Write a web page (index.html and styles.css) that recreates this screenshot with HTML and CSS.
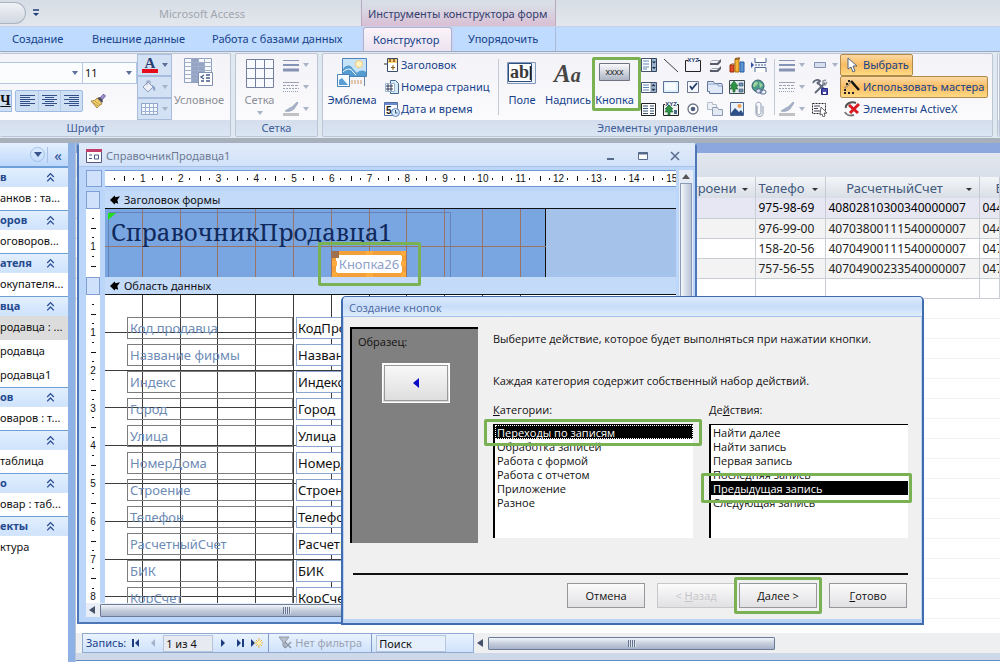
FILE: index.html
```html
<!DOCTYPE html>
<html lang="ru">
<head>
<meta charset="utf-8">
<title>Microsoft Access</title>
<link rel="stylesheet" href="styles.css">
</head>
<body>
<svg class="sprite" aria-hidden="true">
  <symbol id="i-lines" viewBox="0 0 16 16"><path d="M0 3.5h16M0 8h16M0 13h16" stroke="#8592b3"/><path d="M0 8h16" stroke="#8592b3" stroke-width="2"/><path d="M0 13h16" stroke="#8592b3" stroke-width="3"/></symbol>
  <symbol id="i-dashes" viewBox="0 0 16 16"><path d="M0 3.5h16" stroke="#9aa2b4"/><path d="M0 6.500h16" stroke="#9aa2b4" stroke-dasharray="3 1"/><path d="M0 9.500h16" stroke="#9aa2b4" stroke-dasharray="2 1"/><path d="M0 12.500h16" stroke="#9aa2b4" stroke-dasharray="1 1"/></symbol>
  <symbol id="i-pen" viewBox="0 0 16 16"><path d="M2 10c2-1 4-3 7-4l5-5 1 1-4 6c-2 2-6 3-9 2z" fill="#a9b5cc" stroke="#8490a8" stroke-width=".6"/><path d="M0 12h16v3H0z" fill="#bfc1c4"/></symbol>
  <symbol id="i-chev" viewBox="0 0 10 10"><path d="M2 4.500 5 1.500l3 3M2 8.500l3-3 3 3" fill="none" stroke="#2d4f93" stroke-width="1.200"/></symbol>
  <symbol id="i-sect" viewBox="0 0 12 10"><path d="M0 5 5 0l1 2 5-1-3 4 1 4-3-1-1 2z" fill="#000"/></symbol>
</svg>

<div class="app">
  <header class="titlebar">
    <div class="quick"><span class="orb"></span><svg width="8" height="8" viewBox="0 0 8 8"><path d="M1 1h6" stroke="#1e3c7b" stroke-width="1.500"/><path d="M1 4h6l-3 3z" fill="#1e3c7b"/></svg></div>
    <div class="apptitle">Microsoft Access</div>
    <div class="context">Инструменты конструктора форм</div>
  </header>

  <nav class="tabs">
    <button class="tab t1">Создание</button>
    <button class="tab t2">Внешние данные</button>
    <button class="tab t3">Работа с базами данных</button>
    <div class="context-tabs">
      <button class="tab active">Конструктор</button>
      <button class="tab">Упорядочить</button>
    </div>
  </nav>

  <div class="ribbon">
    <section class="group g-font">
      <div class="gbody">
        <div class="fontcol">
          <div class="combos"><div class="combo c-name"><i class="arr"></i></div><div class="combo c-size"><span>11</span><i class="arr"></i></div></div>
          <div class="fmt">
            <button class="fbtn under" aria-label="Подчеркнутый">Ч</button>
            <div class="aligns">
              <button aria-label="По левому краю"><svg width="15" height="14" viewBox="0 0 15 14"><path d="M0 1.500h15M0 3.500h10M0 5.500h15M0 7.500h10M0 9.500h15M0 11.500h10" stroke="#33508a"/></svg></button>
              <button aria-label="По центру"><svg width="15" height="14" viewBox="0 0 15 14"><path d="M0 1.500h15M3 3.500h9M0 5.500h15M3 7.500h9M0 9.500h15M3 11.500h9" stroke="#33508a"/></svg></button>
              <button aria-label="По правому краю"><svg width="15" height="14" viewBox="0 0 15 14"><path d="M0 1.500h15M5 3.500h10M0 5.500h15M5 7.500h10M0 9.500h15M5 11.500h10" stroke="#33508a"/></svg></button>
            </div>
            <button class="plain" aria-label="Формат по образцу"><svg width="16" height="16" viewBox="0 0 16 16"><path d="m10 5 3.500-4 2 2L12 7z" fill="#9d8fd0" stroke="#4b4584" stroke-width=".7"/><path d="m7 5 3-1 3 4-1 2z" fill="#4c4a57"/><path d="M1 8c3 0 5-1 6-3l5 6c-2 1-4 2-5 4z" fill="#f3d26e" stroke="#94733a" stroke-width=".8"/><path d="M3 9.500 8 13M5 8l5 4" stroke="#b38a3a" stroke-width=".8"/></svg></button>
          </div>
        </div>
        <div class="colorcol">
          <button aria-label="Цвет шрифта"><svg width="18" height="18" viewBox="0 0 18 18"><text x="9" y="12" text-anchor="middle" class="ic-a">A</text><path d="M1 13h16v4H1z" fill="#e60c1c"/></svg><i class="arr"></i></button>
          <button aria-label="Цвет заливки"><svg width="16" height="14" viewBox="0 0 16 14"><path d="M2 7 7 2l5 5-5 5z" fill="#edf0f6" stroke="#8e9cb8"/><path d="M6 5V1h3v3" fill="none" stroke="#8e9cb8"/><path d="M11 5c3 1 4 3 3 6-2 0-2-3-3-4z" fill="#8da3cc"/></svg><i class="arr dim"></i></button>
          <button aria-label="Цвет чередующейся строки"><svg width="17" height="12" viewBox="0 0 17 12"><path d="M.5.5h16v11H.5z" fill="#f4f7fb" stroke="#8ea4c8"/><path d="M0 4.500h17M0 8.500h17M4.500 0v12M8.500 0v12M12.500 0v12" stroke="#9cb1d3"/></svg><i class="arr dim"></i></button>
        </div>
        <button class="big dis"><svg width="30" height="32" viewBox="0 0 30 32"><path d="M.5 1.500h27v24H.5z" fill="#f7f9fc" stroke="#8fa0c0"/><path d="M7 1h7v24H7zM14 5h6v16h-6z" fill="#95a4c4"/><path d="M0 5.500h28M0 9.500h28M0 13.500h28M0 17.500h28M0 21.500h28M7.500 1v24M14.500 1v24M20.500 1v24" stroke="#9eafca"/><path d="M14.500 15.500h14v13h-14z" fill="#fff" stroke="#7f90b4"/><path d="m20 18-3 2 3 2m-3 2h3m2-6h4m-4 3h4m-4 3h4" fill="none" stroke="#455b8b" stroke-width="1.300"/></svg><span>Условное</span></button>
      </div>
      <h2>Шрифт</h2>
    </section>

    <section class="group g-grid">
      <div class="gbody">
        <button class="big dis"><svg width="28" height="30" viewBox="0 0 28 30"><path d="M.5.5h27v28H.5zM0 9.500h28M0 19.500h28M9.500 0v29M18.500 0v29" fill="#f8fafd" stroke="#74809d"/></svg><span>Сетка</span><i class="arr dim"></i></button>
        <div class="minicol">
          <button aria-label="Толщина линии"><svg width="16" height="16"><use href="#i-lines"/></svg><i class="arr dim"></i></button>
          <button aria-label="Тип линии"><svg width="16" height="16"><use href="#i-dashes"/></svg><i class="arr dim"></i></button>
          <button aria-label="Цвет линии"><svg width="16" height="16"><use href="#i-pen"/></svg><i class="arr dim"></i></button>
        </div>
      </div>
      <h2>Сетка</h2>
    </section>

    <section class="group g-ctl">
      <div class="gbody">
        <button class="big logo"><svg width="30" height="32" viewBox="0 0 30 32"><path d="M5.500 1.500h24v18h-24z" fill="#c7e3f8" stroke="#4d83b8"/><circle cx="22" cy="7" r="3.500" fill="#fff4c4" stroke="#f0c77a"/><path d="M6 19v-7c4-5 8-4 10 0l4 4c3-3 6-3 9-1v4z" fill="#549bd0"/><path d="M6 15c4-4 8-4 10 0l3 3" stroke="#fff" fill="none"/><path d="M.5 17.500h12v12H.5z" fill="#f5fbff" stroke="#4d83b8"/><path d="M2 28v-5l3-2 6 7z" fill="#5a9fd4"/><path d="M14 24h12M14 26h12" stroke="#c79661" stroke-dasharray="2 1"/><path d="M27.500 20v9" stroke="#6c86a6"/></svg><span>Эмблема</span></button>
        <div class="stack">
          <button><svg width="16" height="16" viewBox="0 0 16 16"><path d="M3.500 1.500h10v13h-10z" fill="#fff" stroke="#3a4a6a"/><path d="M4 2h9v4H4z" fill="#ffd681"/><path d="m5 2 2 3M7 2 5 5m4-3 2 3m0-3L9 5M9 8v5M7 10.500h4" stroke="#875b12"/><path d="M0 7h3" stroke="#333"/></svg>Заголовок</button>
          <button><svg width="16" height="16" viewBox="0 0 16 16"><path d="M6.500 1.500h5l3 3v10h-8z" fill="#d7eaf8" stroke="#3e6a95"/><path d="M1.500 4.500h9v8h-9z" fill="#fff" stroke="#9ab5cf"/><path d="M4 5v7m3-7v7M2 7h7M2 10h7" stroke="#303d58"/></svg>Номера страниц</button>
          <button><svg width="16" height="16" viewBox="0 0 16 16"><path d="M.5 1.500h13v13H.5z" fill="#fff" stroke="#4f6da6"/><path d="M1 2h12v2H1z" fill="#6b8acb"/><text x="2" y="13" class="ic-5">5</text><circle cx="11.500" cy="11.500" r="4" fill="#d9e8f8" stroke="#5a84bd"/><path d="M11.500 9v3h2" stroke="#32567f" fill="none"/></svg>Дата и время</button>
        </div>
        <i class="vsep"></i>
        <button class="big fld"><svg width="30" height="24" viewBox="0 0 30 24"><path d="M.5 1.500h28v21H.5z" fill="#edf2fa" stroke="#8397bb"/><path d="M1.500 2.500h23v18h-23z" fill="#fff" stroke="#2e4f82"/><text x="3" y="17" class="ic-ab">ab</text><path d="M23.500 5v14" stroke="#222" stroke-width="1.500"/></svg><span>Поле</span></button>
        <button class="big lbl"><svg width="32" height="24" viewBox="0 0 32 24"><text x="2" y="21" class="ic-aa">A<tspan class="ic-aa2">a</tspan></text></svg><span>Надпись</span></button>
        <button class="big btn"><svg width="32" height="24" viewBox="0 0 32 24"><defs><linearGradient id="gb" x2="0" y2="1"><stop offset="0" stop-color="#fbfbfd"/><stop offset="1" stop-color="#aab3c3"/></linearGradient></defs><path d="M.5 2.500h30v17H.5z" fill="url(#gb)" stroke="#6f7480"/><text x="15.500" y="14" text-anchor="middle" class="ic-x">xxxx</text></svg><span>Кнопка</span><b class="mark"></b></button>
        <div class="icons">
          <button aria-label="Поле со списком"><svg viewBox="0 0 16 16"><path d="M.5 1.500h10v13H.5z" fill="#fff" stroke="#44536d"/><path d="M2 4h6M2 7h6M2 10h6M2 12h4" stroke="#5b86b8"/><path d="M10.500 1.500h5v13h-5z" fill="#9db4cd" stroke="#34435c"/><path d="M11 4.500h4l-2 2zM11 10h4l-2 2z" fill="#132741"/></svg></button>
          <button aria-label="Линия"><svg viewBox="0 0 16 16"><path d="m1 2 14 13" stroke="#3b3f48"/></svg></button>
          <button aria-label="Группа переключателей"><svg viewBox="0 0 16 16"><path d="M3 3.500H.5v11h15v-11H13" fill="none" stroke="#222"/><text x="8" y="5" text-anchor="middle" class="ic-xyz">XYZ</text></svg></button>
          <button aria-label="Выключатель"><svg viewBox="0 0 16 16"><path d="m3 5.500 2-2h8M3 13.500l2-2h8" fill="none" stroke="#a4a9b3"/><path d="M3 6h7l4-4v3l-3 3H3zM3 13h7l4-4v3l-3 3H3z" fill="#565c69"/></svg></button>
          <button aria-label="Диаграмма"><svg viewBox="0 0 16 16"><path d="M1 8h4v7H1z" fill="#df4b28" stroke="#9f2d10"/><path d="M6 2h4v13H6z" fill="#f8b436" stroke="#ab6e0c"/><path d="M11 5h4v10h-4z" fill="#5c94d5" stroke="#285b9e"/><path d="m6 2 2-1h3L10 2zM1 8l2-1h3" stroke="#8b5210" fill="#ffe18e"/></svg></button>
          <button aria-label="Разрыв страницы"><svg viewBox="0 0 16 16"><path d="M4 1v4.500h11V1M4 15v-4.500h11V15" fill="#fff" stroke="#4d6798"/><path d="M4 8h12" stroke="#4d6798" stroke-dasharray="2 1"/><path d="m0 5 3 3-3 3z" fill="#2e51a0"/></svg></button>
          <button aria-label="Список"><svg viewBox="0 0 16 16"><path d="M.5 3.500h15v10H.5z" fill="#fff" stroke="#44536d"/><path d="M2 6h6M2 8.500h6M2 11h6" stroke="#5b86b8"/><path d="M10 4h5v9h-5z" fill="#9db4cd"/><path d="m11 7 1.500-2L14 7zM11 10h3l-1.500 2zM10 4v9" fill="#132741" stroke="#34435c" stroke-width=".5"/></svg></button>
          <button aria-label="Прямоугольник"><svg viewBox="0 0 16 16"><path d="M.5 2.500h15v11H.5z" fill="#e2f0fd" stroke="#5a7396"/><path d="M2 4h11v7H2z" fill="#fff" opacity=".7"/></svg></button>
          <button aria-label="Флажок"><svg viewBox="0 0 16 16"><path d="M2.500 2.500h11v11h-11z" fill="#f5f8fc" stroke="#6b7890"/><path d="m5 7 2 3 5-6" fill="none" stroke="#26406d" stroke-width="1.800"/></svg></button>
          <button aria-label="Вкладка"><svg viewBox="0 0 16 16"><path d="M.5 4.500v-2h6l1 2h7l1 2v8h-13v-2H.5z" fill="#dfe9f7" stroke="#60729a"/><path d="M1 5h10v2h4" fill="none" stroke="#8da1c7"/></svg></button>
          <button aria-label="Свободная рамка объекта"><svg viewBox="0 0 16 16"><path d="M.5 1.500h15v13H.5z" fill="#e3ecee" stroke="#3e4c50"/><path d="m5 2-4 5h2l-2 3h3v3h2v-3h3L7 7h2z" fill="#2f9345" stroke="#155a27" stroke-width=".6"/><path d="M10 4h4v3h-4zM10 10h4v3h-4z" fill="#7393b4" stroke="#344f70" stroke-width=".6"/></svg></button>
          <button aria-label="Гиперссылка"><svg viewBox="0 0 16 16"><circle cx="7" cy="7" r="6" fill="#4d9b89" stroke="#315e72"/><path d="M3 4c3-3 5 0 3 2S3 9 2 7zM8 3l4 3-3 3z" fill="#9bd49d"/><rect x="5" y="10" width="6" height="4" rx="2" fill="#dce3ee" stroke="#526990"/><rect x="9" y="11" width="6" height="4" rx="2" fill="none" stroke="#526990"/></svg></button>
          <button aria-label="Подчиненная форма"><svg viewBox="0 0 16 16"><path d="M.5 2.500h14v12H.5z" fill="#fff" stroke="#222"/><path d="M2 5h5M2 7.500h5M2 10h5M2 12.500h5M9 5h4M9 7.500h4M9 10h4M9 12.500h4" stroke="#34506e"/></svg></button>
          <button aria-label="Присоединенная рамка объекта"><svg viewBox="0 0 16 16"><path d="M2 3.500H.5v11h15v-11H14" fill="#eef3f0" stroke="#222"/><text x="8" y="5" text-anchor="middle" class="ic-xyz">XYZ</text><path d="m6 4-4 4h2l-2 3h3v3h2v-3h3L8 8h2z" fill="#2f9345" stroke="#155a27" stroke-width=".6"/><path d="M11 9h3v4h-3z" fill="#4c6a8c"/></svg></button>
          <button aria-label="Переключатель"><svg viewBox="0 0 16 16"><circle cx="8" cy="8" r="5" fill="#fff" stroke="#6a7385" stroke-width="1.300"/><circle cx="8" cy="8" r="2.300" fill="#4f5f7d"/></svg></button>
          <button aria-label="Вставка страницы"><svg viewBox="0 0 16 16"><path d="M.5 2.500v-1h5v2h4v5h-9z" fill="#eff2f7" stroke="#b3bccb"/><path d="M5.500 7.500v-1h5l1 2h4v6h-10z" fill="#e3e9f3" stroke="#8d9ab2"/></svg></button>
          <button aria-label="Рисунок"><svg viewBox="0 0 16 16"><path d="M1.500 1.500h13v13h-13z" fill="#e8f2fc" stroke="#49658f"/><path d="m2 12 4-5 4 4 2-2 2 3v2H2z" fill="#2e5287"/><circle cx="10.500" cy="5" r="2" fill="#f09a4b"/></svg></button>
          <button aria-label="Вложение"><svg viewBox="0 0 16 16"><path d="M6 5v6.500c0 3 4 3 4 0v-8c0-3-5-3-5 0v9c0 4 7 4 7 0V5" fill="none" stroke="#8b98ae"/></svg></button>
        </div>
        <i class="vsep"></i>
        <div class="minicol">
          <button aria-label="Толщина"><svg width="16" height="16"><use href="#i-lines"/></svg><i class="arr dim"></i></button>
          <button aria-label="Тип"><svg width="16" height="16"><use href="#i-dashes"/></svg><i class="arr dim"></i></button>
          <button aria-label="Цвет"><svg width="16" height="16"><use href="#i-pen"/></svg><i class="arr dim"></i></button>
        </div>
        <div class="minicol second">
          <button aria-label="Оформление"><svg width="16" height="16" viewBox="0 0 16 16"><path d="M2.500 5.500h11v5h-11z" fill="#d7dfec" stroke="#8592b3"/></svg><i class="arr dim"></i></button>
          <button aria-label="Умолчания"><svg width="16" height="16" viewBox="0 0 16 16"><path d="M1 4c1-3 5-4 7-2L5 5M5 3l9 9M13 4 3 14" fill="none" stroke="#5f687b" stroke-width="1.800"/><path d="M11 5V2l3-1M15 3l-2 3h-2" fill="none" stroke="#8c93a1" stroke-width="1.500"/><path d="M9.500 9.500h6v6h-6z" fill="#4b4eb0" stroke="#272a7c"/><path d="M11 13h3v2h-3z" fill="#fff"/></svg></button>
          <button aria-label="Выделить все"><svg width="16" height="16" viewBox="0 0 16 16"><path d="M.5 2.500h13v10H.5z" fill="none" stroke="#222" stroke-dasharray="2 1"/><path d="M2 5h6M2 7.500h4M2 10h6" stroke="#445"/><path d="m9 6 6 6h-3l1 3-2 1-1-3-2 1z" fill="#fff" stroke="#444" stroke-width=".8"/></svg></button>
        </div>
        <div class="stack last">
          <button class="on"><svg width="16" height="16" viewBox="0 0 16 16"><path d="M4 1v11l3-2 2 5 2-1-2-5h4z" fill="#fff" stroke="#52627e"/></svg>Выбрать</button>
          <button class="on"><svg width="16" height="16" viewBox="0 0 16 16"><path d="m7 2 8 9" stroke="#111" stroke-width="2.500"/><path d="m1 9 6-6" stroke="#777" stroke-dasharray="1 1" stroke-width="2"/><path d="M0 14h2m2 0h2m2 0h2M2 5h2M0 11h2M4 2h2" stroke="#222" stroke-width="2"/></svg>Использовать мастера</button>
          <button><svg width="16" height="16" viewBox="0 0 16 16"><path d="M12 2C7 0 1 3 2 7" stroke="#555" stroke-width="2" fill="none"/><path d="M1 11c1 3 5 4 9 3" stroke="#777" stroke-width="2" fill="none"/><path d="m5 4 9 8m1-9-9 9" stroke="#d91920" stroke-width="3"/></svg>Элементы ActiveX</button>
        </div>
      </div>
      <h2>Элементы управления</h2>
    </section>
    <section class="group g-next"><div class="gbody"></div><h2></h2></section>
  </div>

  <main class="work">
    <aside class="nav">
      <div class="navhead"><span class="drop"><i class="arr dark"></i></span><span class="fold">«</span></div>
      <div class="ngroup"><h3>в<svg width="11" height="11"><use href="#i-chev"/></svg></h3><a href="#">анков : та...</a></div>
      <div class="ngroup"><h3>оров<svg width="11" height="11"><use href="#i-chev"/></svg></h3><a href="#">оговоров...</a></div>
      <div class="ngroup"><h3>ателя<svg width="11" height="11"><use href="#i-chev"/></svg></h3><a href="#">окупателя...</a></div>
      <div class="ngroup"><h3>вца<svg width="11" height="11"><use href="#i-chev"/></svg></h3><a href="#" class="sel">родавца : ...</a><a href="#">родавца</a><a href="#">родавца1</a></div>
      <div class="ngroup"><h3>ов<svg width="11" height="11"><use href="#i-chev"/></svg></h3><a href="#">оваров : т...</a></div>
      <div class="ngroup"><h3><svg width="11" height="11"><use href="#i-chev"/></svg></h3><a href="#">таблица</a></div>
      <div class="ngroup"><h3>о<svg width="11" height="11"><use href="#i-chev"/></svg></h3><a href="#">овар : таб...</a></div>
      <div class="ngroup"><h3>екты<svg width="11" height="11"><use href="#i-chev"/></svg></h3><a href="#">ктура</a></div>
    </aside>

    <div class="desktop">
      <div class="sheet">
        <div class="strip"></div>
        <div class="strip2"></div>
        <table>
          <colgroup><col class="k1"><col class="k2"><col class="k3"><col></colgroup>
          <thead><tr><th class="r">Строени<i class="arr black"></i></th><th>Телефо<i class="arr black"></i></th><th class="c">РасчетныйСчет<i class="arr black"></i></th><th class="bik">БИК</th></tr></thead>
          <tbody>
            <tr class="cur"><td></td><td>975-98-69</td><td>40802810300340000007</td><td>044</td></tr>
            <tr class="alt"><td></td><td>976-99-00</td><td>40703800111540000007</td><td>044</td></tr>
            <tr><td></td><td>158-20-56</td><td>40704900111540000007</td><td>047</td></tr>
            <tr class="alt"><td></td><td>757-56-55</td><td>40704900233540000007</td><td>047</td></tr>
            <tr><td></td><td></td><td></td><td></td></tr>
          </tbody>
        </table>
        <div class="blank"></div>
      </div>
      <div class="recnav">
        <div class="recbox">
          <label for="rec">Запись:</label>
          <button aria-label="Первая"><svg width="8" height="8" viewBox="0 0 8 8"><path d="M1 0v8" stroke="#1d3c80" stroke-width="2"/><path d="M7 0v8L3 4z" fill="#1d3c80"/></svg></button>
          <button aria-label="Предыдущая"><svg width="8" height="8" viewBox="0 0 8 8"><path d="M6 0v8L2 4z" fill="#a5b2cb"/></svg></button>
          <input id="rec" value="1 из 4">
          <button aria-label="Следующая"><svg width="8" height="8" viewBox="0 0 8 8"><path d="M2 0v8l4-4z" fill="#1d3c80"/></svg></button>
          <button aria-label="Последняя"><svg width="8" height="8" viewBox="0 0 8 8"><path d="M7 0v8" stroke="#1d3c80" stroke-width="2"/><path d="M1 0v8l4-4z" fill="#1d3c80"/></svg></button>
          <button aria-label="Новая"><svg width="12" height="10" viewBox="0 0 12 10"><path d="M0 1v8l4-4z" fill="#1d3c80"/><path d="M8 0v10M3 5h9M5 2l6 6M11 2 5 8" stroke="#e8b93c"/><circle cx="8" cy="5" r="2" fill="#fff3ae"/></svg></button>
          <i class="bsep"></i>
          <span class="nofilter"><svg width="14" height="14" viewBox="0 0 14 14"><path d="M1 1h10L7 6v6l-2-2V6z" fill="#bcc2cc" stroke="#8d96a5"/><path d="m7 6 6 6m0-6-6 6" stroke="#8d96a5" stroke-width="1.500"/></svg>Нет фильтра</span>
          <i class="bsep"></i>
          <input class="find" value="Поиск" aria-label="Поиск">
        </div>
        <i class="tri left"></i>
        <div class="track"><div class="thumb"><i></i></div></div>
      </div>
      <div class="status"></div>

      <section class="win">
        <div class="wtitle">
          <svg width="16" height="14" viewBox="0 0 16 14"><path d="M.5.500h15v13H.5z" fill="#fff" stroke="#535a7a"/><path d="M0 0h16v3H0z" fill="#c33d6b"/><path d="M3 6h3M3 9.500h3M8.500 6h4v4h-4z" fill="none" stroke="#44598b"/></svg>
          <span>СправочникПродавца1</span>
          <button aria-label="Свернуть"><svg width="10" height="10" viewBox="0 0 10 10"><path d="M1 8h7" stroke="#566a8c" stroke-width="2"/></svg></button>
          <button aria-label="Развернуть"><svg width="10" height="10" viewBox="0 0 10 10"><path d="M.5 1.500h9v7h-9z" fill="#fff" stroke="#566a8c"/><path d="M0 2.500h10" stroke="#566a8c" stroke-width="2"/></svg></button>
          <button aria-label="Закрыть"><svg width="10" height="10" viewBox="0 0 10 10"><path d="m1 1 8 8M9 1 1 9" stroke="#566a8c" stroke-width="1.500"/></svg></button>
        </div>
        <div class="design">
          <div class="corner"></div>
          <div class="hruler"><i class="half"></i><b>1</b><b>2</b><b>3</b><b>4</b><b>5</b><b>6</b><b>7</b><b>8</b><b>9</b><b>10</b><b>11</b><b>12</b><b>13</b><b>14</b><b>15</b></div>
          <div class="knob"></div>
          <h4><svg width="11" height="10"><use href="#i-sect"/></svg>Заголовок формы</h4>
          <div class="vruler v1"><i class="half"></i><b>1</b><i class="tail"></i></div>
          <div class="headsec">
            <svg class="lines" width="441" height="68" viewBox="0 0 441 68"><path d="M37.500 0v68M75.500 0v68M112.500 0v68M150.500 0v68M188.500 0v68M226.500 0v68M264.500 0v68M301.500 0v68M339.500 0v68M377.500 0v68M415.500 0v68M0 37.500h441" stroke="#9a7565"/><path d="M4 3.500h341.500V68M3.500 4v64" stroke="#6482b5" fill="none"/><path d="M3 4h8l-8 7z" fill="#1fe01f"/></svg>
            <div class="formtitle">СправочникПродавца1</div>
            <div class="newbtn"><svg width="74" height="26" viewBox="0 0 74 26"><path d="M0 0h7v7H0z" fill="#a0714d"/><path d="M34 0h7v4h-7zM69 0h5v5h-5zM69 10h5v5h-5zM0 10h5v5H0zM0 21h5v5H0zM34 22h7v4h-7zM69 21h5v5h-5z" fill="#ffab3d"/></svg><button>Кнопка26</button><b class="mark"></b></div>
          </div>
          <div class="knob"></div>
          <h4><svg width="11" height="10"><use href="#i-sect"/></svg>Область данных</h4>
          <div class="vruler v2"><i class="half"></i><b>1</b><b>2</b><b>3</b><b>4</b><b>5</b><b>6</b><b>7</b><b>8</b></div>
          <div class="datasec">
            <svg class="lines" width="441" height="308" viewBox="0 0 441 308"><path d="M37.500 0v308M75.500 0v308M112.500 0v308M150.500 0v308M188.500 0v308M226.500 0v308M264.500 0v308M301.500 0v308M339.500 0v308M377.500 0v308M415.500 0v308M0 37.500h441M0 75.500h441M0 112.500h441M0 150.500h441M0 188.500h441M0 226.500h441M0 264.500h441M0 301.500h441" stroke="#3c3c3c"/></svg>
            <div class="fields">
              <span class="fl">Код продавца</span><span class="fc">КодПродавца</span>
              <span class="fl">Название фирмы</span><span class="fc">НазваниеФирмы</span>
              <span class="fl">Индекс</span><span class="fc">Индекс</span>
              <span class="fl">Город</span><span class="fc">Город</span>
              <span class="fl">Улица</span><span class="fc">Улица</span>
              <span class="fl">НомерДома</span><span class="fc">НомерДома</span>
              <span class="fl">Строение</span><span class="fc">Строение</span>
              <span class="fl">Телефон</span><span class="fc">Телефон</span>
              <span class="fl">РасчетныйСчет</span><span class="fc">РасчетныйСчет</span>
              <span class="fl">БИК</span><span class="fc">БИК</span>
              <span class="fl">КорСчет</span><span class="fc">КорСчет</span>
            </div>
          </div>
          <div class="vscroll"><i class="tri up"></i><div class="vthumb"></div></div>
          <div class="hscroll"><i class="tri left"></i><div class="thumb"><i></i></div></div>
        </div>
      </section>

      <section class="dialog" role="dialog" aria-labelledby="dt">
        <h2 id="dt">Создание кнопок</h2>
        <div class="dbody">
          <div class="dtop">
            <div class="sample"><span>Образец:</span><div class="pic"><svg width="6" height="10" viewBox="0 0 6 10"><path d="M6 0v10L0 5z" fill="#0a0ac8"/></svg></div></div>
            <div class="dmain">
              <p>Выберите действие, которое будет выполняться при нажатии кнопки.</p>
              <p class="p2">Каждая категория содержит собственный набор действий.</p>
              <div class="lists">
                <div class="lcol"><label for="cat"><u>К</u>атегории:</label>
                  <select id="cat" size="8"><option selected>Переходы по записям</option><option>Обработка записей</option><option>Работа с формой</option><option>Работа с отчетом</option><option>Приложение</option><option>Разное</option></select><b class="mark m-cat"></b></div>
                <div class="lcol"><label for="act">Де<u>й</u>ствия:</label>
                  <select id="act" size="8"><option>Найти далее</option><option>Найти запись</option><option>Первая запись</option><option>Последняя запись</option><option selected>Предыдущая запись</option><option>Следующая запись</option></select><b class="mark m-act"></b></div>
              </div>
            </div>
          </div>
          <div class="dbtns">
            <button>Отмена</button>
            <button class="b-back" disabled>&lt; <u>Н</u>азад</button>
            <button class="b-next"><u>Д</u>алее &gt;<b class="mark"></b></button>
            <button class="b-done"><u>Г</u>отово</button>
          </div>
        </div>
      </section>
    </div>
  </main>
</div>
</body>
</html>
```
FILE: styles.css
```css
* { box-sizing: border-box; }
body { margin: 0; font: 11px/16px "Noto Sans", "Open Sans", sans-serif; color: #15428b; background: #fff; }
button { font: inherit; color: inherit; background: none; border: 0; padding: 0; margin: 0; }
h2, h3, h4, p { margin: 0; font: inherit; }
i { font-style: normal; }
a { color: inherit; text-decoration: none; }
.sprite { position: absolute; width: 0; height: 0; }
.app { min-height: 100vh; display: flex; flex-direction: column; overflow: hidden; }

.arr { display: inline-block; width: 0; height: 0; flex: none; border: 3px solid transparent; border-top: 4px solid #5a6f9a; border-bottom: 0; }
.arr.dim { border-top-color: #a9b3c6; }
.arr.dark { border-top-color: #38558d; border-width: 5px 4px 0; }
.arr.black { border-top-color: #333; border-width: 3px 3px 0; }
.tri { width: 0; height: 0; border: 4px solid transparent; flex: none; }
.tri.left { border-right: 6px solid #46516b; border-left: 0; }
.tri.up { border-bottom: 5px solid #555; border-top: 0; }
.mark { position: absolute; border: 3px solid #79b153; border-radius: 2px; pointer-events: none; }

.titlebar { height: 27px; display: flex; align-items: center; background: linear-gradient(#d7dde5, #e3e7ed); border-bottom: 1px solid #c5d3e5; color: #a2a5ad; }
.quick { width: 159px; display: flex; align-items: center; gap: 6px; }
.orb { width: 26px; height: 22px; border: 1px solid #aab4c2; border-left: 0; border-radius: 0 11px 11px 0; background: linear-gradient(#f0f2f5, #d2d8e1); }
.apptitle { width: 202px; padding-top: 2px; }
.context { align-self: stretch; width: 195px; padding: 6px; white-space: nowrap; color: #34416e; background: linear-gradient(#d9dde6 20%, #d9bed4); border: solid #b7a9c0; border-width: 0 1px; }

.tabs { height: 24px; display: flex; align-items: center; background: #bfdbff; }
.tab { white-space: nowrap; height: 24px; text-align: left; }
.t1 { width: 80px; padding-left: 12px; }
.t2 { width: 120px; padding-left: 12px; }
.t3 { width: 160px; padding-left: 12px; }
.context-tabs { display: flex; width: 196px; padding-left: 3px; border-right: 1px solid #a9bdd9; gap: 16px; }
.active { padding: 0 0 0 9px; width: 89px; background: linear-gradient(#fbf3f8, #ece3f0); border: 1px solid #a9b4d3; border-bottom: 0; border-radius: 3px 3px 0 0; box-shadow: 0 0 3px #e0c0dc; }

.ribbon { display: flex; gap: 4px; padding: 1px 0; background: #e0e8f2; border-top: 1px solid #9fa9bd; border-bottom: 5px solid #a8b0bc; overflow: hidden; }
.group { flex: none; display: flex; flex-direction: column; border: 1px solid #bcc5d4; border-radius: 2px; background: linear-gradient(#f3f3f8, #fdfdfe); }
.gbody { height: 66px; display: flex; }
.gbody > * { flex: none; }
.group > h2 { height: 16px; line-height: 15px; text-align: center; color: #3e5f9a; background: linear-gradient(#d3ddeb, #dbe6f5); }
.g-font { width: 231px; border-left: 0; }
.g-font > h2 { padding-right: 59px; }
.g-grid { width: 83px; }
.g-ctl { width: 671px; }
.g-next { flex: 1; }
.big { position: relative; display: flex; flex-direction: column; align-items: center; }
.big span { height: 22px; line-height: 22px; }
.dis { color: #8c8f98; }
.fontcol { width: 137px; }
.combos { display: flex; margin-top: 8px; }
.combo { height: 22px; border: 1px solid #b3c7e2; border-left: 0; display: flex; align-items: center; justify-content: flex-end; padding-right: 4px; background: #fbfcfe; color: #111; }
.c-name { width: 83px; }
.c-size { flex: 1; padding-left: 2px; justify-content: space-between; }
.fmt { display: flex; align-items: center; margin-top: 6px; }
.fbtn { width: 12px; height: 22px; border: 1px solid #9dbbe2; border-left: 0; background: #cfe0f5; color: #111; font: bold 14px/18px "Liberation Serif", serif; text-decoration: underline; overflow: hidden; }
.aligns { display: flex; margin: 0 7px 0 3px; border: 1px solid #9dbbe2; border-radius: 2px; background: #cfe0f5; height: 22px; }
.aligns button { width: 22px; display: flex; align-items: center; justify-content: center; }
.aligns button + button { border-left: 1px solid #b5cdec; }
.plain svg { display: block; }
.colorcol { width: 35px; display: flex; flex-direction: column; }
.colorcol button { height: 22px; border: 1px solid #a8bddb; background: #d3e1f4; display: flex; align-items: center; justify-content: space-between; padding: 0 3px; }
.g-font .big { padding: 3px 0 0 2px; }
.g-grid .big { padding: 5px 0 0 7px; width: 40px; }
.g-font .big svg { flex: none; }
.minicol { display: flex; flex-direction: column; padding-left: 4px; }
.g-grid .minicol { padding-left: 7px; }
.minicol button { height: 22px; display: flex; align-items: center; gap: 4px; }
.logo { padding: 3px 0 0 1px; width: 57px; }
.stack { padding-left: 4px; width: 118px; display: flex; flex-direction: column; align-items: flex-start; }
.stack button { height: 22px; display: flex; align-items: center; gap: 4px; white-space: nowrap; }
.stack:not(.last) button { padding-left: 0; gap: 1px; }
.vsep { width: 1px; margin: 5px 0; background: #c4cad6; }
.fld, .lbl { width: 46px; padding-top: 7px; }
.btn { width: 47px; padding-top: 7px; }
.fld span, .lbl span, .btn span { margin-top: 4px; }
.btn .mark { inset: 3px -3px 9px 1px; }
.icons { display: grid; grid-template-columns: repeat(6, 22px); grid-template-rows: repeat(3, 22px); margin-right: 4px; }
.icons button { display: flex; align-items: center; justify-content: center; }
.icons svg { width: 16px; height: 16px; overflow: visible; }
.second { padding-left: 7px; width: 35px; }
.last { padding-left: 0; width: auto; }
.last button { padding: 0 3px; border: 1px solid transparent; gap: 3px; }
.last .on { border: 1px solid #b08a4c; border-radius: 2px; background: linear-gradient(#fbd9a2, #f9bc62 50%, #fdda84); }
.ic-a { font: bold 15px "Liberation Serif", serif; fill: #2a3e70; }
.ic-5 { font: bold 10px "Liberation Sans", sans-serif; fill: #222; }
.ic-ab { font: bold 18px "Liberation Serif", serif; fill: #3a3a3a; }
.ic-aa { font: italic bold 25px "Liberation Serif", serif; fill: #474747; }
.ic-aa2 { font-size: 20px; }
.ic-x { font: 9px "Liberation Sans", sans-serif; fill: #222; }
.ic-xyz { font: bold 6px "Liberation Sans", sans-serif; fill: #1d3a6b; }

.work { flex: 1; display: flex; }
.nav { width: 75px; flex: none; background: #fff; border-right: 7px solid #8fb2e6; color: #111; }
.navhead { height: 25px; display: flex; align-items: center; justify-content: flex-end; background: linear-gradient(#e4f0ff, #bdd8fb); border-bottom: 2px solid #6f9fd9; }
.drop { width: 15px; height: 15px; border: 1px solid #a5c1e8; border-radius: 50%; display: flex; align-items: center; justify-content: center; margin-right: 2px; }
.fold { width: 21px; border-left: 1px solid #a5c1e8; text-align: center; font-size: 15px; color: #2d4f93; }
.ngroup h3 { height: 19px; line-height: 18px; display: flex; align-items: center; padding-right: 12px; font-weight: bold; color: #254a90; background: linear-gradient(#e2effe, #cfe3fc); border-bottom: 1px solid #d5e5fa; }
.ngroup h3 svg { margin-left: auto; }
.ngroup { border-bottom: 1px solid #6f9fd9; }
.ngroup:last-child { border-bottom: 0; }
.ngroup a { display: block; height: 24px; line-height: 22px; white-space: nowrap; overflow: hidden; }
.ngroup a:last-child { height: 23px; }
.ngroup .sel { background: #dcdcdc; }

.desktop { flex: 1; min-width: 0; position: relative; display: flex; flex-direction: column; border-left: 1px solid #b9c4d6; }
.sheet { flex: 1; display: flex; flex-direction: column; background: #fff; overflow: hidden; }
.strip { height: 10px; background: #8ba7dd; }
.strip2 { height: 24px; background: linear-gradient(#e2e7ef, #d9dfe8); }
table { width: 100%; table-layout: fixed; border-collapse: collapse; font-size: 12px; color: #222; }
.k1 { width: 679px; } .k2 { width: 70px; } .k3 { width: 154px; }
th { height: 21px; padding: 0 4px 0 3px; font-weight: normal; text-align: left; white-space: nowrap; background: linear-gradient(#f3f5f8, #d9dee6); border-right: 1px solid #c5cad4; color: #41597c; font-size: 13px; overflow: hidden; }
th .arr { float: right; margin: 8px 3px 0 5px; }
th.r { text-align: right; }
th.c { text-align: center; }
th.bik { padding: 0 0 0 16px; }
td { height: 20px; padding: 0 3px; line-height: 19px; border: solid #c9cdd4; border-width: 0 1px 1px 0; white-space: nowrap; overflow: hidden; }
.cur td { background: #e7e7f3; color: #000; }
.alt td { background: #f3f3f3; }
.blank { flex: 1; background: repeating-linear-gradient(#fff 0 19px, #f3f3f3 19px 20px); }
.recnav { display: flex; align-items: center; height: 20px; padding-left: 6px; background: #eeeff1; }
.recbox { width: 392px; height: 20px; display: flex; align-items: center; gap: 3px; padding: 0 3px; background: linear-gradient(#eaf3ff, #cfe2fb); border: 1px solid #8fa9d0; }
.recbox button { display: flex; width: 14px; justify-content: center; }
.recbox input { height: 17px; width: 50px; padding: 0 2px; border: 1px solid #b5c5dd; background: #e7eaf0; font: inherit; color: #111; }
.recbox .find { width: 70px; background: #e6f0fd; }
.bsep { width: 1px; align-self: stretch; background: #7c9bcb; margin: 0 1px; }
.nofilter { color: #9aa3b3; display: flex; align-items: center; justify-content: center; width: 94px; gap: 3px; white-space: nowrap; }
.recnav > .tri { margin: 0 5px 0 3px; }
.track { flex: 1; }
.thumb { height: 13px; border: 1px solid #6c7b96; border-radius: 1px; background: linear-gradient(#f2f5fa, #c5cddd 50%, #a6b3ca); display: flex; align-items: center; justify-content: center; }
.track .thumb { width: 287px; }
.thumb i { width: 8px; height: 7px; background: repeating-linear-gradient(90deg, #67748f 0 1px, #dfe5ef 1px 2px); }
.status { height: 8px; background: #cdd9e8; border-bottom: 1px solid #5d8cc6; margin-bottom: 1px; }

.win { position: absolute; left: 1px; top: 0; width: 620px; background: #bcd6fa; border: 2px solid #4e77b8; border-radius: 4px 4px 0 0; border-top-color: #dbe9fb; box-shadow: inset 0 0 0 1px #dbe9fb; }
.wtitle { height: 22px; display: flex; align-items: center; gap: 4px; padding: 0 6px 0 7px; color: #6d7a92; background: linear-gradient(#e0ebfa, #d3e2f9); border-bottom: 1px solid #a9c4ea; }
.wtitle span { flex: 1; }
.wtitle button { width: 28px; display: flex; justify-content: center; }
.design { display: grid; grid-template-columns: 16px 571px 14px; column-gap: 3px; padding: 3px 3px 5px 7px; background: #bcd6fa; }
.corner { height: 17px; border: 1px solid #7f9fd6; background: #cfe1fb; margin-bottom: 4px; }
.hruler, .vruler { background: #fff; color: #111; font: 10px/16px "Liberation Sans", sans-serif; overflow: hidden; display: flex; }
.hruler { height: 17px; border: solid #6f97d3; border-width: 1px 0; margin-bottom: 4px; }
.hruler b, .vruler b { font-weight: normal; flex: none; text-align: center; }
.hruler b { width: 1cm; background: linear-gradient(#111, #111) 0 50% / 1px 5px no-repeat, linear-gradient(#111, #111) 25% 50% / 1px 2px no-repeat, linear-gradient(#111, #111) 75% 50% / 1px 2px no-repeat; }
.hruler .half { width: 19px; flex: none; background: linear-gradient(#111, #111) 50% 50% / 1px 2px no-repeat; }
.vruler { flex-direction: column; width: 14px; }
.vruler b { height: 1cm; line-height: 38px; background: linear-gradient(#111, #111) 50% 0 / 5px 1px no-repeat, linear-gradient(#111, #111) 50% 25% / 2px 1px no-repeat, linear-gradient(#111, #111) 50% 75% / 2px 1px no-repeat; }
.vruler .half, .vruler .tail { height: 19px; flex: none; background: linear-gradient(#111, #111) 50% 50% / 2px 1px no-repeat; }
.vruler .tail { background: linear-gradient(#111, #111) 50% 0 / 5px 1px no-repeat; }
.v1 { height: 68px; }
.v2 { height: 308px; }
.knob { height: 18px; width: 14px; border: 1px solid #7f9fd6; background: #cfe1fb; }
.design h4 { height: 18px; line-height: 17px; display: flex; align-items: center; gap: 3px; padding-left: 5px; color: #111; border-bottom: 1px solid #111; background: #c3daf9; }
.headsec { position: relative; height: 68px; background: linear-gradient(90deg, #79a5e0 440px, #111 440px 441px, #a5c3ea 441px); padding: 7px 0 0 6px; }
.lines { position: absolute; left: 0; top: 0; }
.formtitle { position: relative; width: max-content; font: 24px/32px "Noto Serif", "DejaVu Serif", "Liberation Serif", serif; color: #10295c; }
.newbtn { position: absolute; left: 227px; top: 42px; width: 74px; height: 26px; }
.newbtn svg { position: absolute; left: 0; top: 0; }
.newbtn button { width: 74px; height: 26px; border: 4px solid #f3a03b; background: #fff; color: #8ea0cc; font-size: 13px; line-height: 16px; }
.newbtn .mark { inset: -9px -15px -9px -14px; }
.datasec { position: relative; height: 308px; overflow: hidden; background: #fff; padding: 22px 0 0 22px; font-size: 13px; }
.fields { position: relative; display: grid; grid-template-columns: 166px 245px; gap: 5px 3px; grid-auto-rows: 22px; line-height: 20px; }
.fl { border: 1px solid #7c7c7c; padding-left: 2px; color: #6d8bb5; }
.fc { border: 1px solid #8ba5cc; padding-left: 1px; color: #111; background: #fff; }
.vscroll { grid-column: 3; grid-row: 1 / 6; display: flex; flex-direction: column; align-items: center; background: #e4ebf5; gap: 4px; padding-top: 4px; }
.vthumb { flex: 1; width: 12px; border: 1px solid #8b9ab5; background: linear-gradient(90deg, #f4f7fb, #b7c3d6); }
.hscroll { grid-column: 1 / 3; display: flex; align-items: center; gap: 5px; padding-left: 3px; height: 14px; background: #e9eef6; }
.hscroll .thumb { width: 373px; }

.dialog { position: absolute; left: 265px; top: 153px; width: 583px; border: 2px solid #3f6cae; border-top-width: 1px; border-radius: 5px 5px 0 0; background: #f1f0f1; color: #111; font-family: "Open Sans", "Noto Sans", sans-serif; }
.dialog > h2 { height: 20px; line-height: 22px; padding-left: 6px; color: #4a689e; background: linear-gradient(#dbe9fd, #c8ddf9 50%, #dfedff); border-bottom: 1px solid #a7c2e8; border-radius: 4px 4px 0 0; }
.dbody { padding: 10px 13px 11px 6px; border: solid #bdd3f2; border-width: 0 1px 4px; }
.dtop { display: flex; gap: 15px; padding-bottom: 30px; }
.sample { width: 131px; height: 216px; background: #808080; border: solid #000; border-width: 2px 0 0 2px; padding: 5px 6px; }
.pic { width: 68px; height: 40px; margin: 13px 0 0 24px; display: flex; align-items: center; justify-content: center; border: 1px solid #fff; outline: 1px solid #999; outline-offset: -3px; background: linear-gradient(#fafafa, #dcdcdc); }
.dmain { flex: 1; padding-top: 4px; }
.p2 { margin-top: 26px; }
.lists { display: grid; grid-template-columns: 200px 199px; gap: 16px; margin-top: 13px; }
.lcol { position: relative; }
.lcol label { display: block; height: 22px; }
select { display: block; width: 100%; height: 114px; margin: 0; padding: 0; border: solid #000; border-width: 1px 0 0 2px; border-radius: 0; background: #fff; color: #111; font: inherit; overflow: hidden; outline: 0; scrollbar-width: none; }
option { height: 14px; min-height: 14px; line-height: 14px; padding: 0 2px; }
option:checked { background: #000 linear-gradient(#000, #000); color: #fff; }
#cat option:checked { outline: 1px dotted #fff; outline-offset: -1px; }
.m-cat { inset: 17px -9px auto -9px; height: 27px; }
.m-act { inset: 71px -4px auto -8px; height: 30px; }
.dbtns { display: flex; justify-content: flex-end; gap: 12px; border-top: 2px solid #111; padding: 8px 1px 0; margin: 0 0 0 3px; }
.dbtns button { position: relative; width: 78px; height: 25px; border: 1px solid #96979b; background: linear-gradient(#fbfbfb, #e1e1e4); color: #111; }
.dbtns .b-back { border-color: #c8c8cc; color: #c5c5c9; margin-right: -8px; }
.b-next .mark { inset: -7px -6px; }
```
